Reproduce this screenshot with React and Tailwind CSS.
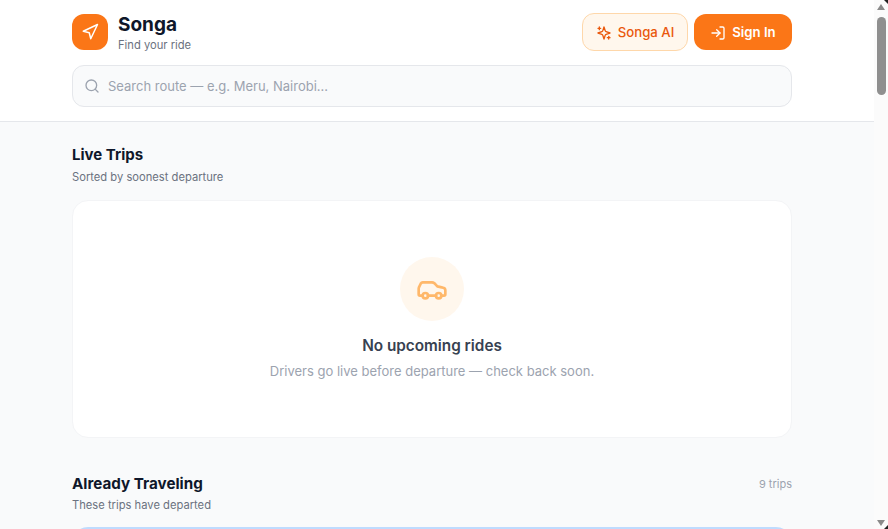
import { Navigation, Search, LogIn } from 'lucide-react';

function SparklesIcon() {
  return (
    <svg className="w-4 h-4" fill="none" stroke="currentColor" strokeWidth="2" strokeLinecap="round" strokeLinejoin="round" viewBox="0 0 24 24">
      <path d="m12 3-1.9 5.8a2 2 0 0 1-1.3 1.3L3 12l5.8 1.9a2 2 0 0 1 1.3 1.3L12 21l1.9-5.8a2 2 0 0 1 1.3-1.3L21 12l-5.8-1.9a2 2 0 0 1-1.3-1.3L12 3Z" />
      <path d="M5 3v4" />
      <path d="M19 17v4" />
      <path d="M3 5h4" />
      <path d="M17 19h4" />
    </svg>
  );
}

function CarIcon() {
  return (
    <svg className="w-8 h-8 text-orange-300" fill="none" stroke="currentColor" strokeWidth="2" strokeLinecap="round" strokeLinejoin="round" viewBox="0 0 24 24">
      <path d="M19 17h2c.6 0 1-.4 1-1v-3c0-.9-.7-1.7-1.5-1.9C18.7 10.6 16 10 16 10s-1.3-1.4-2.2-2.3c-.5-.4-1.1-.7-1.8-.7H5c-.6 0-1.1.4-1.4.9l-1.4 2.9A3.7 3.7 0 0 0 2 12v4c0 .6.4 1 1 1h2" />
      <circle cx="7" cy="17" r="2" />
      <path d="M9 17h6" />
      <circle cx="17" cy="17" r="2" />
    </svg>
  );
}

function Scrollbar() {
  return (
    <div className="relative w-[14px] shrink-0 h-full bg-[#fbfbfb] flex flex-col items-center">
      <div className="mt-[4px] w-0 h-0 border-l-[4px] border-r-[4px] border-b-[6px] border-l-transparent border-r-transparent border-b-[#8a8a8a]" />
      <div className="mt-[7px] w-[9px] h-[78px] rounded-full bg-[#8f8f8f]" />
      <div className="mt-auto mb-[3px] w-0 h-0 border-l-[4px] border-r-[4px] border-t-[6px] border-l-transparent border-r-transparent border-t-[#8a8a8a]" />
      {/* dark window corners */}
      <svg className="absolute top-0 right-0 w-[4px] h-[4px]" viewBox="0 0 4 4"><path d="M0 0h4v4z" fill="#222" /></svg>
      <svg className="absolute bottom-0 right-0 w-[4px] h-[4px]" viewBox="0 0 4 4"><path d="M4 0v4H0z" fill="#222" /></svg>
    </div>
  );
}

export default function App() {
  return (
    <div className="flex h-screen overflow-hidden font-['Inter',sans-serif]">
      <div className="w-[874px] shrink-0 h-full overflow-hidden bg-[#f9fafb]">
        {/* Header */}
        <header className="bg-white border-b border-[#e5e7eb] pl-[72px] pr-[82px] pt-[13px] pb-[14px]">
          <div className="flex items-center justify-between h-[38px]">
            <div className="flex items-center gap-[10px]">
              <div className="w-9 h-9 rounded-xl bg-[#fb7617] flex items-center justify-center">
                <Navigation className="w-[18px] h-[18px] text-white" />
              </div>
              <div className="mt-[2px]">
                <h1 className="text-[19px] leading-[24px] font-bold text-[#0f172a]">Songa</h1>
                <p className="text-[11.2px] leading-[16px] text-[#6b7280]">Find your ride</p>
              </div>
            </div>
            <div className="flex items-center gap-[6px]">
              <button className="h-[38px] w-[106px] pt-[2px] justify-center rounded-xl bg-[#fff7ed] border border-[#fed7aa] text-[#ea580c] text-[13.2px] font-medium flex items-center gap-[6px]">
                <SparklesIcon />
                Songa AI
              </button>
              <button className="h-9 w-[98px] pt-[2px] justify-center rounded-xl bg-[#fb7617] text-white text-[13.2px] font-semibold flex items-center gap-[6px]">
                <LogIn className="w-4 h-4" />
                Sign In
              </button>
            </div>
          </div>
          <div className="mt-[14px] h-[42px] rounded-xl bg-[#f9fafb] border border-[#e5e7eb] flex items-center gap-[8px] px-[11px]">
            <Search className="w-4 h-4 text-[#9ca3af]" />
            <span className="pt-[1px] text-[13px] text-[#9ca3af]">Search route — e.g. Meru, Nairobi...</span>
          </div>
        </header>

        {/* Live trips */}
        <main className="pl-[72px] pr-[82px] pt-[24px]">
          <section>
            <h2 className="text-[15px] leading-[18px] font-bold text-[#0f172a]">Live Trips</h2>
            <p className="mt-[5px] text-[11.2px] leading-[16px] text-[#6b7280]">Sorted by soonest departure</p>
            <div className="mt-[15px] h-[238px] bg-white rounded-2xl border border-[#f3f4f6] flex flex-col items-center pt-[56px]">
              <div className="w-16 h-16 rounded-full bg-[#fff7ed] flex items-center justify-center">
                <CarIcon />
              </div>
              <p className="mt-[15px] text-[15.3px] leading-[20px] font-semibold text-[#374151]">No upcoming rides</p>
              <p className="mt-[5px] text-[13px] leading-[20px] text-[#9ca3af]">Drivers go live before departure — check back soon.</p>
            </div>
          </section>

          <section className="mt-[37px]">
            <div className="flex items-center justify-between">
              <h2 className="text-[15.2px] leading-[18px] font-bold text-[#0f172a]">Already Traveling</h2>
              <span className="text-[11px] text-[#9ca3af]">9 trips</span>
            </div>
            <p className="mt-[4px] text-[11.2px] leading-[16px] text-[#6b7280]">These trips have departed</p>
            <div className="mt-[14px] h-[100px] rounded-2xl bg-white border-2 border-[#bfdbfe]" />
          </section>
        </main>
      </div>
      <Scrollbar />
    </div>
  );
}
